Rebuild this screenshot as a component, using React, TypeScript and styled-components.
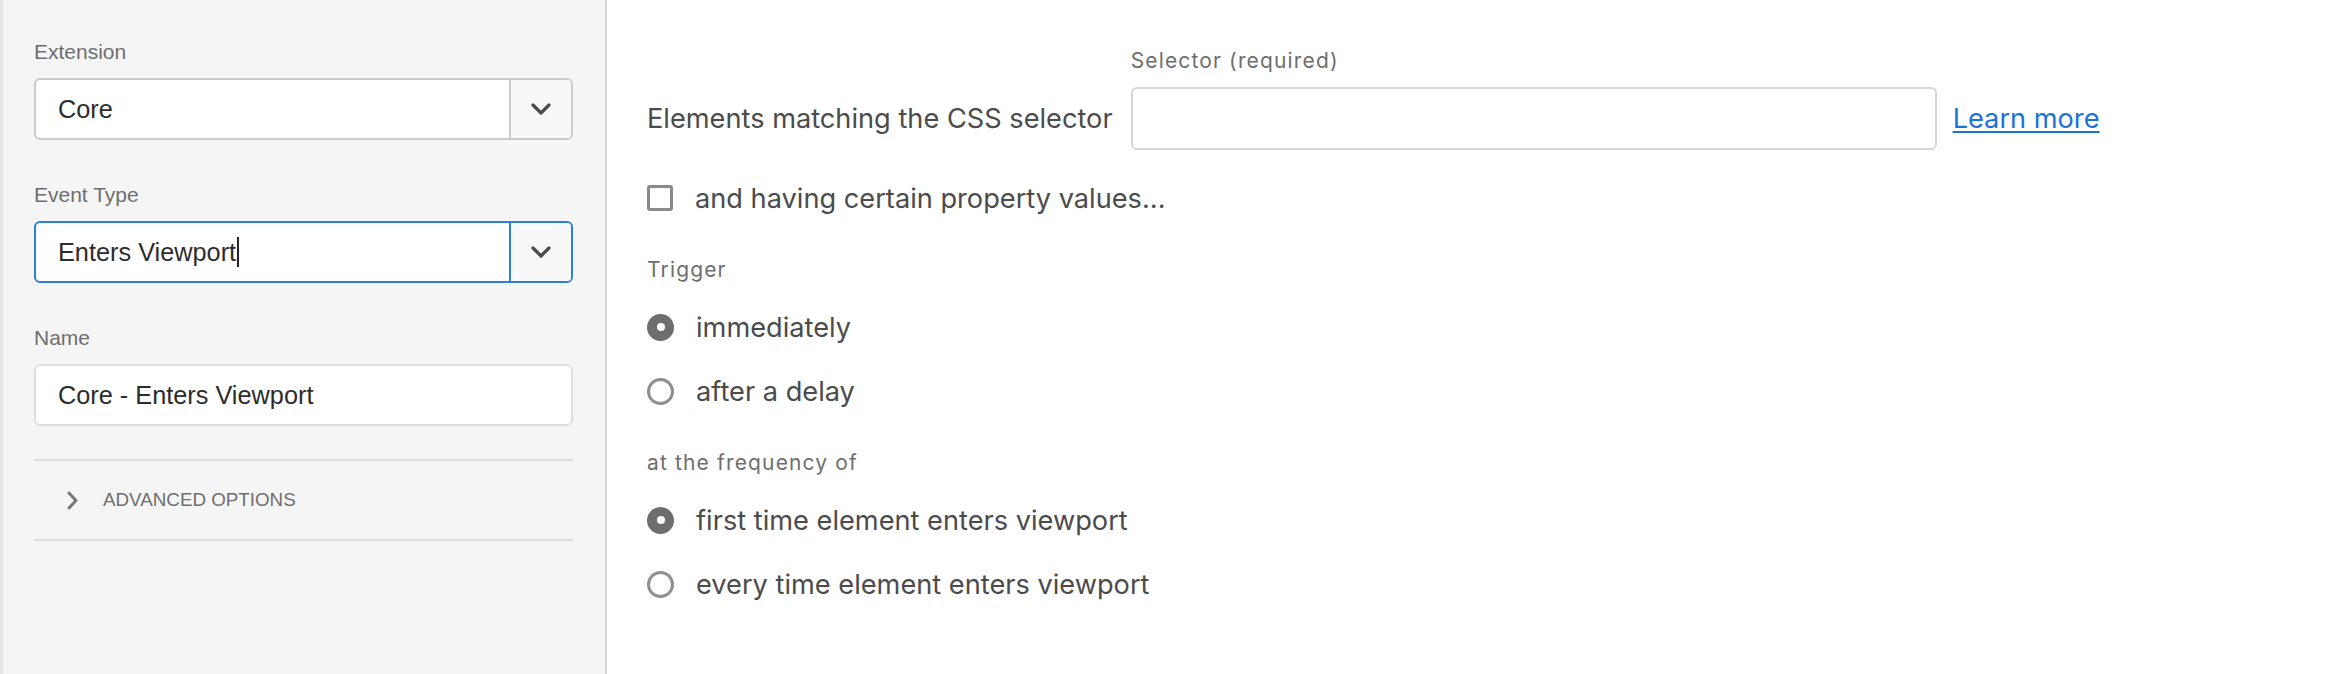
import styled, { createGlobalStyle, css } from 'styled-components';

const GlobalStyle = createGlobalStyle`
  html, body {
    margin: 0;
    padding: 0;
    background: #ffffff;
  }
  body {
    font-family: "Liberation Sans", Arial, sans-serif;
  }
`;

const Page = styled.div`
  display: flex;
  height: 674px;
  width: 2344px;
  overflow: hidden;
`;

const Sidebar = styled.aside`
  width: 539px;
  flex-shrink: 0;
  padding: 38px 32px 0 31px;
  background: #f5f5f5;
  border-left: 3px solid #e6e6e6;
  border-right: 2px solid #d3d3d3;
  display: flex;
  flex-direction: column;
  gap: 41px;
`;

const Field = styled.div`
  display: flex;
  flex-direction: column;
`;

const FieldLabel = styled.div`
  font-size: 21px;
  line-height: 28px;
  color: #6e6e6e;
  margin-bottom: 12px;
`;

const ComboBox = styled.div<{ $focused?: boolean }>`
  display: flex;
  height: 62px;
  box-sizing: border-box;
  border: 2px solid ${(p) => (p.$focused ? '#2a7fdc' : '#cbcbcb')};
  border-radius: 6px;
  overflow: hidden;
  background: #ffffff;
`;

const ComboValue = styled.div`
  flex: 1;
  display: flex;
  align-items: center;
  padding-left: 22px;
  font-size: 25.3px;
  color: #2c2c2c;
`;

const ComboButton = styled.div<{ $focused?: boolean }>`
  width: 60px;
  display: flex;
  align-items: center;
  justify-content: center;
  background: #f8f8f8;
  border-left: 2px solid ${(p) => (p.$focused ? '#2a7fdc' : '#cbcbcb')};
`;

const Caret = styled.span`
  display: inline-block;
  width: 2px;
  height: 30px;
  margin-left: 1px;
  background: #222;
`;

const TextBox = styled.div`
  height: 62px;
  box-sizing: border-box;
  border: 2px solid #dedede;
  border-radius: 6px;
  background: #ffffff;
  display: flex;
  align-items: center;
  padding-left: 22px;
  font-size: 25.3px;
  color: #2c2c2c;
`;

const Advanced = styled.div`
  margin-top: -8px;
  border-top: 2px solid #dcdcdc;
  border-bottom: 2px solid #dcdcdc;
  height: 78px;
  display: flex;
  align-items: center;
  padding-left: 33px;
  gap: 25px;
  font-size: 18.8px;
  color: #6e6e6e;
`;

const Main = styled.main`
  flex: 1;
  padding: 46px 0 0 40px;
  font-family: Inter, "Liberation Sans", sans-serif;
  color: #4b4b4b;
`;

const SelectorRow = styled.div`
  display: flex;
  align-items: flex-end;
`;

const RowText = styled.div`
  font-size: 27.2px;
  line-height: 63px;
  margin-right: 18px;
`;

const SelectorField = styled.div`
  display: flex;
  flex-direction: column;
`;

const SmallLabel = styled.div<{ $top?: number }>`
  font-size: 21px;
  letter-spacing: 1.15px;
  line-height: 30px;
  color: #6e6e6e;
  ${(p) =>
    p.$top !== undefined &&
    css`
      margin-top: ${p.$top}px;
    `}
`;

const SelectorInput = styled.div`
  margin-top: 11px;
  width: 806px;
  height: 63px;
  box-sizing: border-box;
  border: 2px solid #d6d6d6;
  border-radius: 6px;
  background: #fff;
`;

const LearnMore = styled.a`
  font-size: 27.2px;
  line-height: 63px;
  margin-left: 16px;
  color: #1a73d6;
  text-decoration: underline;
  text-underline-offset: 3px;
  text-decoration-thickness: 2px;
  cursor: pointer;
`;

const OptionRow = styled.div<{ $top: number }>`
  display: flex;
  align-items: center;
  height: 44px;
  margin-top: ${(p) => p.$top}px;
  gap: 22px;
  font-size: 27.2px;
  color: #4b4b4b;
`;

const CheckBox = styled.span`
  width: 26px;
  height: 26px;
  box-sizing: border-box;
  border: 3px solid #8a8a8a;
  border-radius: 3px;
  background: #fff;
  flex-shrink: 0;
`;

const Radio = styled.span<{ $checked?: boolean }>`
  width: 27px;
  height: 27px;
  box-sizing: border-box;
  border-radius: 50%;
  flex-shrink: 0;
  display: flex;
  align-items: center;
  justify-content: center;
  ${(p) =>
    p.$checked
      ? css`
          background: #6e6e6e;
          &::after {
            content: '';
            width: 8px;
            height: 8px;
            border-radius: 50%;
            background: #fff;
          }
        `
      : css`
          border: 3px solid #8f8f8f;
          background: #fff;
        `}
`;

const ChevronDown = () => (
  <svg width="20" height="12" viewBox="0 0 20 12">
    <polyline points="2,2 10,10 18,2" fill="none" stroke="#4b4b4b" strokeWidth="3.2" strokeLinecap="round" strokeLinejoin="round" />
  </svg>
);

const ChevronRight = () => (
  <svg width="11" height="19" viewBox="0 0 11 19">
    <polyline points="2,2 9,9.5 2,17" fill="none" stroke="#777" strokeWidth="3" strokeLinecap="round" strokeLinejoin="round" />
  </svg>
);

const App = () => {
  return (
    <Page>
      <GlobalStyle />
      <Sidebar>
        <Field>
          <FieldLabel>Extension</FieldLabel>
          <ComboBox>
            <ComboValue>Core</ComboValue>
            <ComboButton><ChevronDown /></ComboButton>
          </ComboBox>
        </Field>
        <Field>
          <FieldLabel>Event Type</FieldLabel>
          <ComboBox $focused>
            <ComboValue>Enters Viewport<Caret /></ComboValue>
            <ComboButton $focused><ChevronDown /></ComboButton>
          </ComboBox>
        </Field>
        <Field>
          <FieldLabel>Name</FieldLabel>
          <TextBox>Core - Enters Viewport</TextBox>
        </Field>
        <Advanced>
          <ChevronRight />
          <span>ADVANCED OPTIONS</span>
        </Advanced>
      </Sidebar>

      <Main>
        <SelectorRow>
          <RowText>Elements matching the CSS selector</RowText>
          <SelectorField>
            <SmallLabel>Selector (required)</SmallLabel>
            <SelectorInput />
          </SelectorField>
          <LearnMore>Learn more</LearnMore>
        </SelectorRow>

        <OptionRow $top={26}>
          <CheckBox />
          <span>and having certain property values...</span>
        </OptionRow>

        <SmallLabel $top={35}>Trigger</SmallLabel>
        <OptionRow $top={20}>
          <Radio $checked />
          <span>immediately</span>
        </OptionRow>
        <OptionRow $top={20}>
          <Radio />
          <span>after a delay</span>
        </OptionRow>

        <SmallLabel $top={35}>at the frequency of</SmallLabel>
        <OptionRow $top={20}>
          <Radio $checked />
          <span>first time element enters viewport</span>
        </OptionRow>
        <OptionRow $top={20}>
          <Radio />
          <span>every time element enters viewport</span>
        </OptionRow>
      </Main>
    </Page>
  );
};

export default App;
